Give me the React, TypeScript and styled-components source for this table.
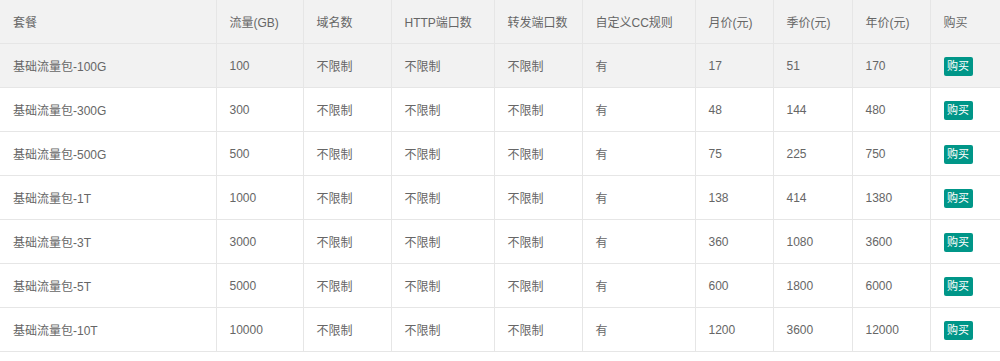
import styled, { createGlobalStyle } from "styled-components";

const GlobalStyle = createGlobalStyle`
  html, body {
    margin: 0;
    padding: 0;
    background: #fff;
  }
  body {
    font-family: "Liberation Sans", "Noto Sans CJK SC", sans-serif;
    font-size: 12px;
    color: #666;
  }
`;

const Table = styled.table`
  width: 1000px;
  border-collapse: collapse;
  table-layout: fixed;
  background: #fff;
`;

const HeadCell = styled.th`
  height: 43px;
  padding: 0 13px;
  text-align: left;
  font-weight: normal;
  background: #f2f2f2;
  border-bottom: 1px solid #e6e6e6;
  border-right: 1px solid #e6e6e6;
  white-space: nowrap;
  &:last-child {
    border-right: none;
  }
`;

const Row = styled.tr<{ $hover?: boolean }>`
  background: ${(p) => (p.$hover ? "#f2f2f2" : "#fff")};
`;

const Cell = styled.td`
  height: 43px;
  padding: 0 13px;
  border-bottom: 1px solid #e6e6e6;
  border-right: 1px solid #e6e6e6;
  white-space: nowrap;
  &:last-child {
    border-right: none;
  }
`;

const BuyButton = styled.button`
  display: inline-block;
  width: 29px;
  height: 19px;
  line-height: 19px;
  padding: 0;
  margin-top: 2px;
  border: none;
  border-radius: 2px;
  background: #009688;
  color: #fff;
  font-family: inherit;
  font-size: 11px;
  text-align: center;
  cursor: pointer;
  vertical-align: middle;
  &:hover {
    opacity: 0.85;
  }
`;

const widths = [216, 87, 88, 103, 88, 113, 78, 79, 78, 70];

const headers = [
  "套餐",
  "流量(GB)",
  "域名数",
  "HTTP端口数",
  "转发端口数",
  "自定义CC规则",
  "月价(元)",
  "季价(元)",
  "年价(元)",
  "购买",
];

const plans = [
  { name: "基础流量包-100G", flow: 100, month: 17, season: 51, year: 170 },
  { name: "基础流量包-300G", flow: 300, month: 48, season: 144, year: 480 },
  { name: "基础流量包-500G", flow: 500, month: 75, season: 225, year: 750 },
  { name: "基础流量包-1T", flow: 1000, month: 138, season: 414, year: 1380 },
  { name: "基础流量包-3T", flow: 3000, month: 360, season: 1080, year: 3600 },
  { name: "基础流量包-5T", flow: 5000, month: 600, season: 1800, year: 6000 },
  { name: "基础流量包-10T", flow: 10000, month: 1200, season: 3600, year: 12000 },
];

export default function App() {
  return (
    <>
      <GlobalStyle />
      <Table>
        <colgroup>
          {widths.map((w, i) => (
            <col key={i} style={{ width: w }} />
          ))}
        </colgroup>
        <thead>
          <tr>
            {headers.map((h) => (
              <HeadCell key={h}>{h}</HeadCell>
            ))}
          </tr>
        </thead>
        <tbody>
          {plans.map((p, i) => (
            <Row key={p.name} $hover={i === 0}>
              <Cell>{p.name}</Cell>
              <Cell>{p.flow}</Cell>
              <Cell>不限制</Cell>
              <Cell>不限制</Cell>
              <Cell>不限制</Cell>
              <Cell>有</Cell>
              <Cell>{p.month}</Cell>
              <Cell>{p.season}</Cell>
              <Cell>{p.year}</Cell>
              <Cell>
                <BuyButton>购买</BuyButton>
              </Cell>
            </Row>
          ))}
        </tbody>
      </Table>
    </>
  );
}
